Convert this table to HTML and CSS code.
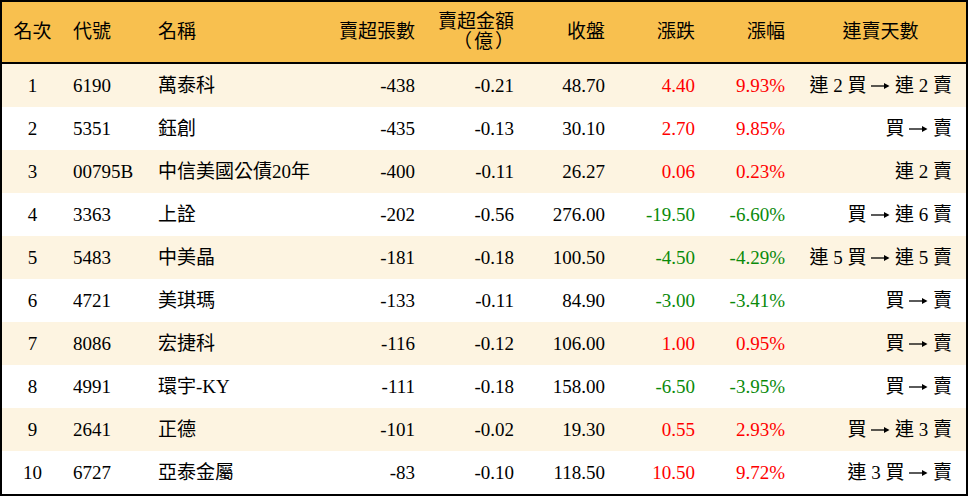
FILE: index.html
```html
<!DOCTYPE html>
<html lang="zh-Hant">
<head>
<meta charset="utf-8">
<link rel="stylesheet" href="styles.css">
</head>
<body>
<div class="table">
  <div class="row head">
    <div class="c center">名次</div>
    <div class="c left">代號</div>
    <div class="c left">名稱</div>
    <div class="c right">賣超張數</div>
    <div class="c right two">賣超金額<br><span class="paren">（億）</span></div>
    <div class="c right">收盤</div>
    <div class="c right">漲跌</div>
    <div class="c right">漲幅</div>
    <div class="c center">連賣天數</div>
  </div>
  <div class="row odd">
    <div class="c center">1</div><div class="c left">6190</div><div class="c left">萬泰科</div>
    <div class="c right">-438</div><div class="c right">-0.21</div><div class="c right">48.70</div>
    <div class="c right up">4.40</div><div class="c right up">9.93%</div><div class="c last">連 2 買 <svg class="arr" viewBox="0 0 19 10"><path d="M0 5H17"/><path class="hd" d="M13 2L18.5 5L13 8Z"/></svg> 連 2 賣</div>
  </div>
  <div class="row">
    <div class="c center">2</div><div class="c left">5351</div><div class="c left">鈺創</div>
    <div class="c right">-435</div><div class="c right">-0.13</div><div class="c right">30.10</div>
    <div class="c right up">2.70</div><div class="c right up">9.85%</div><div class="c last">買 <svg class="arr" viewBox="0 0 19 10"><path d="M0 5H17"/><path class="hd" d="M13 2L18.5 5L13 8Z"/></svg> 賣</div>
  </div>
  <div class="row odd">
    <div class="c center">3</div><div class="c left">00795B</div><div class="c left">中信美國公債20年</div>
    <div class="c right">-400</div><div class="c right">-0.11</div><div class="c right">26.27</div>
    <div class="c right up">0.06</div><div class="c right up">0.23%</div><div class="c last">連 2 賣</div>
  </div>
  <div class="row">
    <div class="c center">4</div><div class="c left">3363</div><div class="c left">上詮</div>
    <div class="c right">-202</div><div class="c right">-0.56</div><div class="c right">276.00</div>
    <div class="c right down">-19.50</div><div class="c right down">-6.60%</div><div class="c last">買 <svg class="arr" viewBox="0 0 19 10"><path d="M0 5H17"/><path class="hd" d="M13 2L18.5 5L13 8Z"/></svg> 連 6 賣</div>
  </div>
  <div class="row odd">
    <div class="c center">5</div><div class="c left">5483</div><div class="c left">中美晶</div>
    <div class="c right">-181</div><div class="c right">-0.18</div><div class="c right">100.50</div>
    <div class="c right down">-4.50</div><div class="c right down">-4.29%</div><div class="c last">連 5 買 <svg class="arr" viewBox="0 0 19 10"><path d="M0 5H17"/><path class="hd" d="M13 2L18.5 5L13 8Z"/></svg> 連 5 賣</div>
  </div>
  <div class="row">
    <div class="c center">6</div><div class="c left">4721</div><div class="c left">美琪瑪</div>
    <div class="c right">-133</div><div class="c right">-0.11</div><div class="c right">84.90</div>
    <div class="c right down">-3.00</div><div class="c right down">-3.41%</div><div class="c last">買 <svg class="arr" viewBox="0 0 19 10"><path d="M0 5H17"/><path class="hd" d="M13 2L18.5 5L13 8Z"/></svg> 賣</div>
  </div>
  <div class="row odd">
    <div class="c center">7</div><div class="c left">8086</div><div class="c left">宏捷科</div>
    <div class="c right">-116</div><div class="c right">-0.12</div><div class="c right">106.00</div>
    <div class="c right up">1.00</div><div class="c right up">0.95%</div><div class="c last">買 <svg class="arr" viewBox="0 0 19 10"><path d="M0 5H17"/><path class="hd" d="M13 2L18.5 5L13 8Z"/></svg> 賣</div>
  </div>
  <div class="row">
    <div class="c center">8</div><div class="c left">4991</div><div class="c left">環宇-KY</div>
    <div class="c right">-111</div><div class="c right">-0.18</div><div class="c right">158.00</div>
    <div class="c right down">-6.50</div><div class="c right down">-3.95%</div><div class="c last">買 <svg class="arr" viewBox="0 0 19 10"><path d="M0 5H17"/><path class="hd" d="M13 2L18.5 5L13 8Z"/></svg> 賣</div>
  </div>
  <div class="row odd">
    <div class="c center">9</div><div class="c left">2641</div><div class="c left">正德</div>
    <div class="c right">-101</div><div class="c right">-0.02</div><div class="c right">19.30</div>
    <div class="c right up">0.55</div><div class="c right up">2.93%</div><div class="c last">買 <svg class="arr" viewBox="0 0 19 10"><path d="M0 5H17"/><path class="hd" d="M13 2L18.5 5L13 8Z"/></svg> 連 3 賣</div>
  </div>
  <div class="row">
    <div class="c center">10</div><div class="c left">6727</div><div class="c left">亞泰金屬</div>
    <div class="c right">-83</div><div class="c right">-0.10</div><div class="c right">118.50</div>
    <div class="c right up">10.50</div><div class="c right up">9.72%</div><div class="c last">連 3 買 <svg class="arr" viewBox="0 0 19 10"><path d="M0 5H17"/><path class="hd" d="M13 2L18.5 5L13 8Z"/></svg> 賣</div>
  </div>
</div>
</body>
</html>
```
FILE: styles.css
```css
html, body {
  margin: 0;
  padding: 0;
  background: #fff;
}
.table {
  width: 968px;
  height: 496px;
  box-sizing: border-box;
  border: 2px solid #000;
  font-family: "Liberation Serif", "Noto Sans CJK TC", serif;
  font-size: 19px;
  color: #000;
  background: #fff;
}
.row {
  display: grid;
  grid-template-columns: 61px 85px 177px 100px 99px 91px 90px 90px 171px;
  height: 43px;
  align-items: center;
  white-space: nowrap;
}
.row.head {
  height: 60px;
  background: #f8c04f;
  border-bottom: 2px solid #000;
}
.row.odd {
  background: #fdf4e1;
}
.c {
  line-height: 20px;
}
.paren {
  letter-spacing: 2px;
  margin-right: -2px;
}
.center { text-align: center; }
.left { text-align: left; padding-left: 10px; }
.right { text-align: right; padding-right: 10px; }
.last { text-align: right; padding-right: 14px; }
.up { color: #ff0000; }
.down { color: #0a8a0a; }
.arr {
  width: 19px;
  height: 10px;
  vertical-align: 1px;
  overflow: visible;
}
.arr path {
  stroke: #000;
  stroke-width: 1.3;
  fill: none;
}
.arr path.hd {
  fill: #000;
  stroke: none;
}
```
